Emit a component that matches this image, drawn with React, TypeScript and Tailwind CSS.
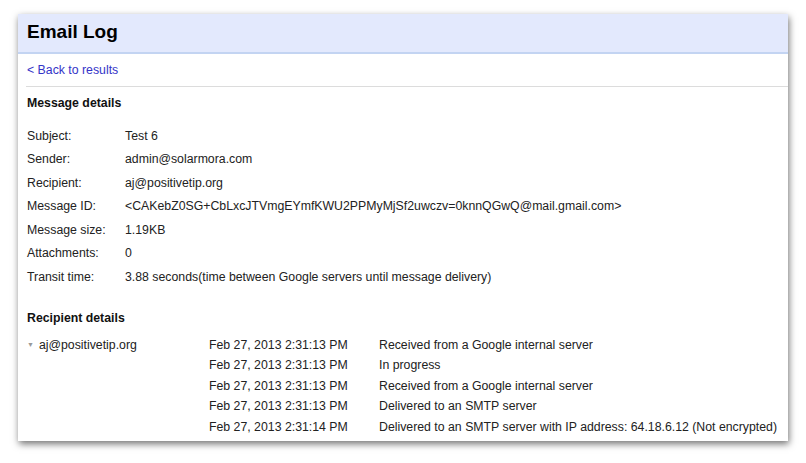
import React from "react";

const details: [string, string][] = [
  ["Subject:", "Test 6"],
  ["Sender:", "admin@solarmora.com"],
  ["Recipient:", "aj@positivetip.org"],
  ["Message ID:", "<CAKebZ0SG+CbLxcJTVmgEYmfKWU2PPMyMjSf2uwczv=0knnQGwQ@mail.gmail.com>"],
  ["Message size:", "1.19KB"],
  ["Attachments:", "0"],
  ["Transit time:", "3.88 seconds(time between Google servers until message delivery)"],
];

const events: [string, string][] = [
  ["Feb 27, 2013 2:31:13 PM", "Received from a Google internal server"],
  ["Feb 27, 2013 2:31:13 PM", "In progress"],
  ["Feb 27, 2013 2:31:13 PM", "Received from a Google internal server"],
  ["Feb 27, 2013 2:31:13 PM", "Delivered to an SMTP server"],
  ["Feb 27, 2013 2:31:14 PM", "Delivered to an SMTP server with IP address: 64.18.6.12 (Not encrypted)"],
];

export default function App() {
  return (
    <div
      className="w-[806px] h-[463px] bg-white overflow-hidden pt-[14px] pl-[18px]"
      style={{ fontFamily: '"Liberation Sans", Arial, sans-serif' }}
    >
      <div className="w-[770px] h-[427px] bg-white shadow-[1px_3px_7px_rgba(0,0,0,0.55)] text-[12.3px] text-[#222]">
        <div className="h-[40px] bg-[#e3e9fd] border-b-2 border-[#c3d4f2] flex items-center pl-[9px] pb-[4px]">
          <h1 className="text-[19px] font-bold text-black leading-none">Email Log</h1>
        </div>
        <div className="h-[32px] flex items-center pl-[9px]">
          <a className="text-[#3434c8] leading-none">&lt; Back to results</a>
        </div>
        <div className="ml-[8px] border-t border-[#dcdcdc]" />
        <div className="h-[32px] flex items-center pl-[9px] font-bold text-[#111]">Message details</div>
        <div className="mt-[5px] pl-[9px]">
          {details.map(([k, v]) => (
            <div key={k} className="h-[23.5px] flex items-center">
              <div className="w-[98px] shrink-0">{k}</div>
              <div className="whitespace-nowrap">{v}</div>
            </div>
          ))}
        </div>
        <div className="mt-[18px] h-[24px] flex items-center pl-[9px] font-bold text-[#111]">Recipient details</div>
        <div className="mt-[4px] pl-[9px] flex">
          <div className="w-[182px] shrink-0 h-[20.5px] flex items-center">
            <span className="text-[7px] text-[#999] mr-[5px] leading-none">▼</span>
            <span>aj@positivetip.org</span>
          </div>
          <div>
            {events.map(([d, s], i) => (
              <div key={i} className="h-[20.5px] flex items-center whitespace-nowrap">
                <div className="w-[170px] shrink-0">{d}</div>
                <div>{s}</div>
              </div>
            ))}
          </div>
        </div>
      </div>
    </div>
  );
}
